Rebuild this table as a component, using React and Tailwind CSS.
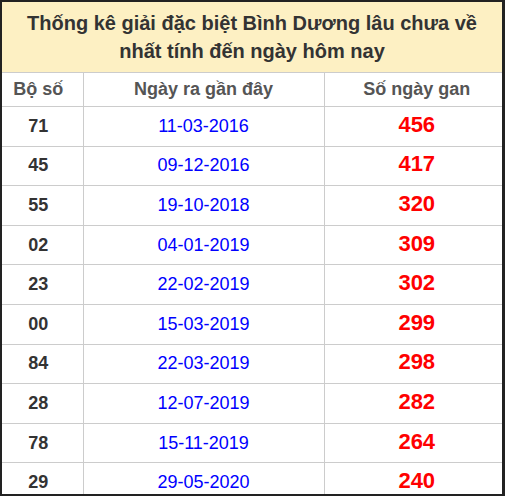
import React from 'react';

const rows = [
  ['71', '11-03-2016', '456'],
  ['45', '09-12-2016', '417'],
  ['55', '19-10-2018', '320'],
  ['02', '04-01-2019', '309'],
  ['23', '22-02-2019', '302'],
  ['00', '15-03-2019', '299'],
  ['84', '22-03-2019', '298'],
  ['28', '12-07-2019', '282'],
  ['78', '15-11-2019', '264'],
  ['29', '29-05-2020', '240'],
];

const App = () => {
  return (
    <div className="w-[505px] h-[496px] bg-white font-['Liberation_Sans',Arial,sans-serif]">
      <div className="h-full border-l-2 border-t-2 border-b-2 border-r-[3px] border-[#222] overflow-hidden">
        <div className="h-[70px] bg-[#fdf0c3] flex items-center justify-center text-center text-[20px] leading-[28px] font-bold text-[#333] px-4">
          Thống kê giải đặc biệt Bình Dương lâu chưa về nhất tính đến ngày hôm nay
        </div>
        <table className="w-full border-collapse table-fixed">
          <colgroup>
            <col className="w-[81px]" />
            <col className="w-[241px]" />
            <col />
          </colgroup>
          <thead>
            <tr className="h-[34px] border-t border-[#ccc]">
              <th className="pr-2 text-[18px] font-bold text-[#555] text-center">Bộ số</th>
              <th className="text-[18px] font-bold text-[#555] text-center border-l border-[#ccc]">Ngày ra gần đây</th>
              <th className="pl-[7px] text-[18px] font-bold text-[#555] text-center border-l border-[#ccc]">Số ngày gan</th>
            </tr>
          </thead>
          <tbody>
            {rows.map(([num, date, gan]) => (
              <tr key={num} className="h-[39.6px] border-t border-[#ccc]">
                <td className="pr-2 text-center text-[18px] font-bold text-[#333]">{num}</td>
                <td className="text-center text-[18px] text-[#0000ff] border-l border-[#ccc]">{date}</td>
                <td className="pl-[7px] pb-[3px] leading-none text-center text-[22px] font-bold text-[#ff0000] border-l border-[#ccc]">{gan}</td>
              </tr>
            ))}
          </tbody>
        </table>
      </div>
    </div>
  );
};

export default App;
